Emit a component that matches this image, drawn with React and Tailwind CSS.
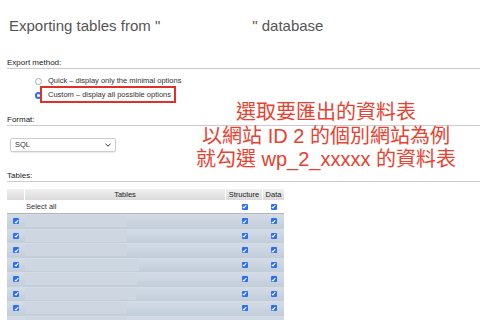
import React from 'react';

const ROW_BOXES = [102, 102, 102, 114, 112, 111, 102, 102];

function Check() {
  return (
    <span className="inline-flex w-[6px] h-[6px] items-center justify-center rounded-[1px] bg-[#2a6ff2]">
      <svg width="5" height="5" viewBox="0 0 5 5">
        <path d="M0.8 2.8 L2 3.9 L4.3 1" stroke="#fff" strokeWidth="1.1" fill="none" />
      </svg>
    </span>
  );
}

export default function App() {
  return (
    <div className="relative w-[480px] h-[320px] overflow-hidden bg-white font-['Liberation_Sans',Arial,sans-serif] text-[#222]">
      <h1 className="pl-[9px] pt-[17px] text-[15px] leading-[18px] text-[#555] whitespace-pre">
        Exporting tables from "<span className="inline-block w-[92px]" />" database
      </h1>

      {/* Export method */}
      <div className="ml-[7px] mt-[23px] h-[11px] border-b border-[#ccc] text-[8px] leading-[10px]">Export method:</div>
      <div className="mt-[5px] text-[7.5px] text-[#333]">
        <div className="flex items-center h-[14px] pl-[35px] gap-[6px]">
          <span className="w-[7px] h-[7px] rounded-full border border-[#aaa] bg-white" />
          <span>Quick – display only the minimal options</span>
        </div>
        <div className="flex items-center h-[14px] pl-[35px] gap-[6px]">
          <span className="w-[7px] h-[7px] rounded-full bg-[#2a6ff2] flex items-center justify-center">
            <span className="w-[3px] h-[3px] rounded-full bg-white" />
          </span>
          <span>Custom – display all possible options</span>
        </div>
      </div>

      {/* Format */}
      <div className="ml-[7px] mt-[13px] h-[11px] border-b border-[#ccc] text-[8px] leading-[10px]">Format:</div>
      <div className="ml-[10px] mt-[12px] w-[106px] h-[14px] flex items-center justify-between px-[4px] border border-[#ccc] rounded-[2px] bg-white shadow-[0_1px_1px_rgba(0,0,0,0.08)] text-[7.5px] text-[#333]">
        <span>SQL</span>
        <svg width="6" height="4" viewBox="0 0 6 4">
          <path d="M0.5 0.8 L3 3.2 L5.5 0.8" stroke="#333" strokeWidth="1" fill="none" />
        </svg>
      </div>

      {/* Tables */}
      <div className="ml-[7px] mt-[19px] h-[11px] border-b border-[#ccc] text-[8px] leading-[10px]">Tables:</div>
      <div className="ml-[7px] mt-[7px] w-[277px] text-[7.5px] text-[#333]">
        <div className="grid grid-cols-[18px_201px_37px_21px] h-[11px] bg-[linear-gradient(#f0f0f0,#dadada)] text-[#222]">
          <div className="border-r border-white" />
          <div className="border-r border-white flex items-center justify-center">Tables</div>
          <div className="border-r border-white flex items-center justify-center">Structure</div>
          <div className="flex items-center justify-center">Data</div>
        </div>
        <div className="grid grid-cols-[18px_201px_37px_21px] h-[14px] bg-white border-b border-[#b4b4b4]">
          <div />
          <div className="flex items-center pl-[1px]">Select all</div>
          <div className="flex items-center justify-center"><Check /></div>
          <div className="flex items-center justify-center"><Check /></div>
        </div>
        {ROW_BOXES.map((w, i) => (
          <div
            key={i}
            className="grid grid-cols-[18px_201px_37px_21px] h-[14.5px] bg-[linear-gradient(#d4dce6,#c2cdda)]"
          >
            <div className="flex items-center justify-center"><Check /></div>
            <div className="flex items-center">
              <div className="h-[12px] bg-[#cdd6e1]" style={{ width: w }} />
            </div>
            <div className="flex items-center justify-center"><Check /></div>
            <div className="flex items-center justify-center"><Check /></div>
          </div>
        ))}
      </div>

      {/* annotation */}
      <div className="absolute left-[40px] top-[86px] w-[136px] h-[17px] border-2 border-[#e0302a]" />
      <div className="absolute left-[180px] top-[101px] w-[292px] text-center text-[20px] leading-[23.5px] text-[#e8412f] font-['Liberation_Sans','Noto_Sans_CJK_TC',sans-serif]">
        <div>選取要匯出的資料表</div>
        <div>以網站 ID 2 的個別網站為例</div>
        <div>就勾選 wp_2_xxxxx 的資料表</div>
      </div>
    </div>
  );
}
